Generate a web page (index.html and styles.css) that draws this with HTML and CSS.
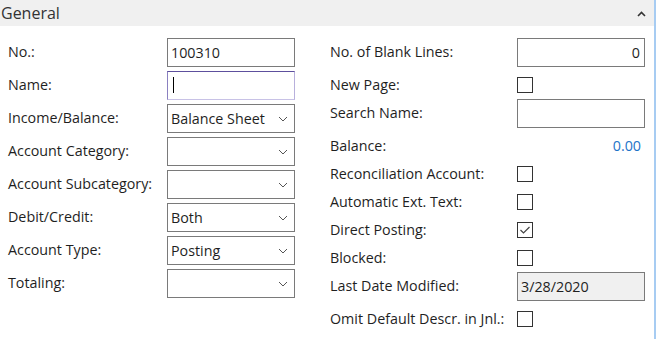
FILE: index.html
```html
<!DOCTYPE html>
<html lang="en">
<head>
  <meta charset="UTF-8" />
  <meta name="viewport" content="width=device-width, initial-scale=1.0" />
  <title>G/L Account Card - General</title>
  <link rel="stylesheet" href="styles.css">
</head>
<body>
  <div class="panel">
    <div class="section-head">
      <span class="section-title">General</span>
      <svg class="collapse" width="9" height="6" viewBox="0 0 9 6">
        <path d="M1 5 L4.5 1.5 L8 5" fill="none" stroke="#333" stroke-width="1.6" />
      </svg>
    </div>

    <div class="form">
      <div class="col col-left">
        <div class="row">
          <span class="label">No.:</span>
          <div class="box">100310</div>
        </div>
        <div class="row">
          <span class="label">Name:</span>
          <div class="box focused"><span class="caret"></span></div>
        </div>
        <div class="row">
          <span class="label">Income/Balance:</span>
          <div class="box select"><span>Balance Sheet</span>
            <svg class="chev" width="10" height="6" viewBox="0 0 10 6"><path d="M1 1 L5 5 L9 1" fill="none" stroke="#555" stroke-width="1" /></svg>
          </div>
        </div>
        <div class="row">
          <span class="label">Account Category:</span>
          <div class="box select"><span></span>
            <svg class="chev" width="10" height="6" viewBox="0 0 10 6"><path d="M1 1 L5 5 L9 1" fill="none" stroke="#555" stroke-width="1" /></svg>
          </div>
        </div>
        <div class="row">
          <span class="label">Account Subcategory:</span>
          <div class="box select"><span></span>
            <svg class="chev" width="10" height="6" viewBox="0 0 10 6"><path d="M1 1 L5 5 L9 1" fill="none" stroke="#555" stroke-width="1" /></svg>
          </div>
        </div>
        <div class="row">
          <span class="label">Debit/Credit:</span>
          <div class="box select"><span>Both</span>
            <svg class="chev" width="10" height="6" viewBox="0 0 10 6"><path d="M1 1 L5 5 L9 1" fill="none" stroke="#555" stroke-width="1" /></svg>
          </div>
        </div>
        <div class="row">
          <span class="label">Account Type:</span>
          <div class="box select"><span>Posting</span>
            <svg class="chev" width="10" height="6" viewBox="0 0 10 6"><path d="M1 1 L5 5 L9 1" fill="none" stroke="#555" stroke-width="1" /></svg>
          </div>
        </div>
        <div class="row">
          <span class="label">Totaling:</span>
          <div class="box select"><span></span>
            <svg class="chev" width="10" height="6" viewBox="0 0 10 6"><path d="M1 1 L5 5 L9 1" fill="none" stroke="#555" stroke-width="1" /></svg>
          </div>
        </div>
      </div>

      <div class="col col-right">
        <div class="row">
          <span class="label">No. of Blank Lines:</span>
          <div class="box number">0</div>
        </div>
        <div class="row short">
          <span class="label">New Page:</span>
          <span class="check"></span>
        </div>
        <div class="row">
          <span class="label">Search Name:</span>
          <div class="box"></div>
        </div>
        <div class="row short">
          <span class="label">Balance:</span>
          <span class="amount">0.00</span>
        </div>
        <div class="row short">
          <span class="label">Reconciliation Account:</span>
          <span class="check"></span>
        </div>
        <div class="row short">
          <span class="label">Automatic Ext. Text:</span>
          <span class="check"></span>
        </div>
        <div class="row short">
          <span class="label">Direct Posting:</span>
          <span class="check">
            <svg width="14" height="14" viewBox="0 0 14 14"><path d="M2.5 7 L5.5 10 L11.5 4" fill="none" stroke="#444" stroke-width="1.2" /></svg>
          </span>
        </div>
        <div class="row short">
          <span class="label">Blocked:</span>
          <span class="check"></span>
        </div>
        <div class="row">
          <span class="label">Last Date Modified:</span>
          <div class="box readonly">3/28/2020</div>
        </div>
        <div class="row short">
          <span class="label">Omit Default Descr. in Jnl.:</span>
          <span class="check"></span>
        </div>
      </div>
    </div>
  </div>
</body>
</html>
```

FILE: styles.css
```css
:root {
  --text: #1f1f1f;
  --border: #7a7a7a;
  --head-bg: #f0f0f0;
  --accent: #1e74c8;
}

body {
  margin: 0;
  font-family: "Open Sans", "Noto Sans", Arial, sans-serif;
  font-size: 14.3px;
  color: var(--text);
  background: #fff;
}

.panel {
  width: 654px;
  height: 339px;
  border-right: 2px solid #a7ccf2;
}

.section-head {
  height: 26px;
  background: var(--head-bg);
  display: flex;
  align-items: center;
  justify-content: space-between;
  padding: 0 8px 0 1px;
}

.section-title {
  font-size: 16px;
  color: #333;
}

.collapse {
  margin-top: 1px;
}

.form {
  display: flex;
  gap: 35px;
  padding: 12px 0 0 8px;
}

.col {
  display: flex;
  flex-direction: column;
}

.row {
  display: flex;
  height: 33px;
  align-items: flex-start;
}

.row .label {
  line-height: 28px;
}

.row.short {
  height: 28px;
  align-items: center;
}

.row.short .label {
  line-height: 26px;
}

.col-left .label {
  width: 159px;
}

.col-right .label {
  width: 187px;
}

.box {
  box-sizing: border-box;
  width: 128px;
  height: 29px;
  border: 1px solid var(--border);
  padding: 0 4px 1px 3px;
  display: flex;
  align-items: center;
}

.box.focused {
  border-color: #5d4f9d #b8b0dc #c8c2e6 #8a80c0;
}

.caret {
  width: 1px;
  height: 16px;
  background: #000;
  margin-left: 2px;
}

.box.select {
  justify-content: space-between;
  padding-right: 6px;
}

.chev {
  margin-top: 2px;
}

.box.number {
  justify-content: flex-end;
}

.box.readonly {
  background: var(--head-bg);
}

.check {
  box-sizing: border-box;
  width: 16px;
  height: 16px;
  border: 1px solid #333;
  display: flex;
  align-items: center;
  justify-content: center;
}

.amount {
  width: 124px;
  text-align: right;
  color: var(--accent);
  line-height: 26px;
}
```
